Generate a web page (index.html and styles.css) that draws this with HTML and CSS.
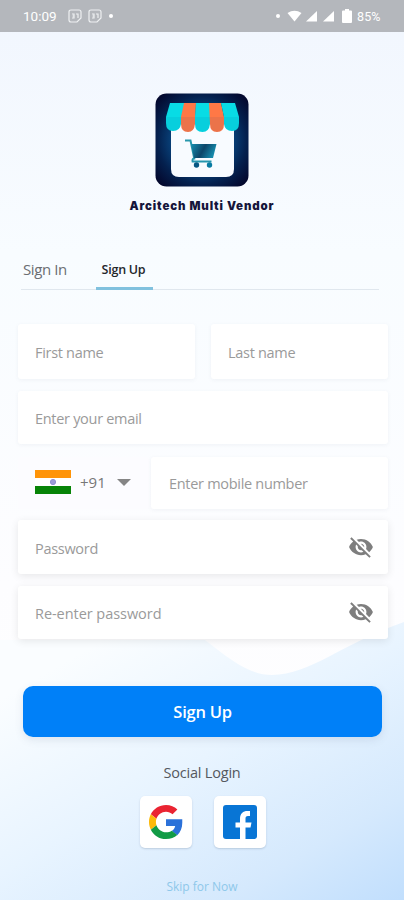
FILE: index.html
```
<!DOCTYPE html>
<html lang="en">
<head>
<meta charset="utf-8">
<title>Arcitech Multi Vendor</title>
<link rel="stylesheet" href="styles.css">
</head>
<body>
<div class="screen">
  <svg class="backdrop" viewBox="0 0 404 900" aria-hidden="true">
    <defs>
      <linearGradient id="sky" x1="0" y1="0" x2="0" y2="1"><stop offset="0" stop-color="#f1f6fe"/><stop offset=".28" stop-color="#f8fcff"/><stop offset=".65" stop-color="#fdfdff"/><stop offset="1" stop-color="#fff"/></linearGradient>
      <linearGradient id="wave" gradientUnits="userSpaceOnUse" x1="120" y1="630" x2="310" y2="960"><stop offset="0" stop-color="#fafdff"/><stop offset=".4" stop-color="#e8f4ff"/><stop offset=".75" stop-color="#d5e9fd"/><stop offset="1" stop-color="#c0defd"/></linearGradient>
    </defs>
    <rect width="404" height="900" fill="url(#sky)"/>
    <path d="M0 640H205C232 661 250 675 272 675C310 675 345 642 404 622V900H0Z" fill="url(#wave)"/>
  </svg>

  <header class="status">
    <span class="clock">10:09</span>
    <svg class="cal" viewBox="0 0 14 14"><path d="M3 1h8q2 0 2 2v6l-4 4H3q-2 0-2-2V3q0-2 2-2Z"/><path d="M4 5h2v2H4.500h1.500v2H4M8 5h2v4"/></svg>
    <svg class="cal" viewBox="0 0 14 14"><path d="M3 1h8q2 0 2 2v6l-4 4H3q-2 0-2-2V3q0-2 2-2Z"/><path d="M4 5h2v2H4.500h1.500v2H4M8 5h2v4"/></svg>
    <i class="dot"></i>
    <svg class="signals" viewBox="0 0 78 16">
      <circle cx="3" cy="8" r="2"/><path d="M12.500 5Q19.500 .500 26.500 5L19.500 13.500Z"/><path d="M42 3v10.500H31Z"/><path d="M59 3v10.500H48Z"/><path d="M68 2.500h2V1h4v1.500h2q1 0 1 1V14q0 1-1 1h-8q-1 0-1-1V3.500q0-1 1-1Z"/>
    </svg>
    <span class="charge">85%</span>
  </header>

  <section class="brand">
    <svg class="logo" viewBox="0 0 94 94">
      <defs>
        <radialGradient id="night" cx=".5" cy=".5" r=".66"><stop offset=".3" stop-color="#0c5b9c"/><stop offset=".72" stop-color="#04214f"/><stop offset="1" stop-color="#03062b"/></radialGradient>
        <linearGradient id="metal" x1="0" y1="0" x2="1" y2=".3"><stop offset="0" stop-color="#168fb0"/><stop offset=".55" stop-color="#0c4569"/><stop offset="1" stop-color="#178aab"/></linearGradient>
      </defs>
      <rect x=".500" y=".500" width="93" height="93" rx="11" fill="url(#night)"/>
      <path d="M16 28H79V76Q79 84 71 84H24Q16 84 16 76Z" fill="#f8fbff"/>
      <path d="M15 10H30L26 31Q25 38 18 38Q11 38 11 30V24Z" fill="#08dce5"/>
      <path d="M29 10H41L40 31Q39 39 33 39Q26 39 26 31V24Z" fill="#ff7846"/>
      <path d="M41 10H55V31Q54 39 47.500 39Q40 39 40 31V24Z" fill="#08dce5"/>
      <path d="M54 10H66L69 24V31Q69 39 62 39Q55 39 55 31Z" fill="#ff7846"/>
      <path d="M66 10H80L84 24V30Q84 38 77 38Q70 38 69 31V24Z" fill="#08dce5"/>
      <path d="M11 24H84V30Q84 38 77 38Q70 38 69 31Q68 39 62 39Q56 39 55 31Q54 39 47.500 39Q41 39 40 31Q39 39 33 39Q27 39 26 31Q25 38 18 38Q11 38 11 30Z" fill="#003f80" opacity=".08"/>
      <path d="M30 47.500h5.500l4 19" fill="none" stroke="#2898ac" stroke-width="2"/>
      <path d="M36 51H61.500L58 65H39Z" fill="url(#metal)"/>
      <path d="M39 65q-2 1-1.500 3.500h19" fill="none" stroke="#2495ad" stroke-width="1.800"/>
      <circle cx="41.500" cy="72" r="2.700" fill="#075783"/><circle cx="54.500" cy="72" r="2.700" fill="#087ba2"/>
    </svg>
    <h1 class="name">Arcitech Multi Vendor</h1>
  </section>

  <nav class="tabs">
    <a class="tab"><span class="t-in">Sign In</span></a>
    <a class="tab active"><span class="t-up">Sign Up</span></a>
  </nav>

  <form class="form">
    <div class="row names">
      <label class="field"><span class="hint">First name</span></label>
      <label class="field"><span class="hint">Last name</span></label>
    </div>
    <label class="field email"><span class="hint">Enter your email</span></label>
    <div class="row phone">
      <div class="field code">
        <svg class="flag" viewBox="0 0 36 24"><path fill="#fff" d="M0 0h36v24H0z"/><path fill="#ff9408" d="M0 0h36v8H0z"/><path fill="#078407" d="M0 16h36v8H0z"/><circle cx="18" cy="12" r="2.600" fill="#9c9cd8" stroke="#8f8fd0"/></svg>
        <span class="prefix">+91</span>
        <svg class="caret" viewBox="0 0 14 7"><path d="M0 0h14L7 7Z"/></svg>
      </div>
      <label class="field mobile"><span class="hint">Enter mobile number</span></label>
    </div>
    <label class="field secret"><span class="hint">Password</span>
      <svg class="eye" viewBox="0 0 24 24"><path d="M12 7c2.760 0 5 2.240 5 5 0 .65-.13 1.260-.36 1.830l2.920 2.920c1.510-1.260 2.700-2.890 3.430-4.750-1.730-4.390-6-7.500-11-7.500-1.400 0-2.740.25-3.980.7l2.160 2.160C10.740 7.130 11.350 7 12 7zM2 4.270l2.280 2.280.46.46C3.080 8.300 1.780 10.020 1 12c1.730 4.390 6 7.500 11 7.500 1.550 0 3.030-.3 4.380-.84l.42.42L19.730 22 21 20.730 3.270 3 2 4.270zM7.530 9.800l1.550 1.550c-.05.21-.08.43-.08.65 0 1.660 1.340 3 3 3 .22 0 .44-.03.65-.08l1.550 1.550c-.67.33-1.410.53-2.200.53-2.760 0-5-2.240-5-5 0-.79.2-1.530.53-2.200zm4.310-.78l3.150 3.150.02-.16c0-1.660-1.340-3-3-3l-.17.01z"/></svg>
    </label>
    <label class="field secret"><span class="hint repeat">Re-enter password</span>
      <svg class="eye" viewBox="0 0 24 24"><path d="M12 7c2.760 0 5 2.240 5 5 0 .65-.13 1.260-.36 1.830l2.920 2.920c1.510-1.260 2.700-2.890 3.430-4.750-1.730-4.390-6-7.500-11-7.500-1.400 0-2.740.25-3.980.7l2.160 2.160C10.740 7.130 11.350 7 12 7zM2 4.270l2.280 2.280.46.46C3.080 8.300 1.780 10.020 1 12c1.730 4.390 6 7.500 11 7.500 1.550 0 3.030-.3 4.380-.84l.42.42L19.730 22 21 20.730 3.270 3 2 4.270zM7.530 9.800l1.550 1.550c-.05.21-.08.43-.08.65 0 1.660 1.340 3 3 3 .22 0 .44-.03.65-.08l1.550 1.550c-.67.33-1.410.53-2.200.53-2.760 0-5-2.240-5-5 0-.79.2-1.530.53-2.200zm4.310-.78l3.150 3.150.02-.16c0-1.660-1.340-3-3-3l-.17.01z"/></svg>
    </label>
    <button class="submit" type="button">Sign Up</button>
  </form>

  <footer class="social">
    <p class="title">Social Login</p>
    <div class="providers">
      <a class="provider"><svg viewBox="0 0 48 48"><path fill="#ea2432" d="M24 9.500c3.540 0 6.710 1.220 9.210 3.600l6.850-6.850C35.900 2.380 30.470 0 24 0 14.620 0 6.510 5.380 2.560 13.220l7.980 6.190C12.430 13.720 17.740 9.500 24 9.500z"/><path fill="#2b71d9" d="M46.980 20H24v9.500h12.940c-.58 2.960-2.260 5.480-4.780 7.180l7.730 6C44.400 38.500 47 32.300 47 24.550c0-1.600 0-3-.02-4.550z"/><path fill="#fcb90a" d="M10.530 28.590c-.48-1.450-.76-2.990-.76-4.590s.27-3.140.76-4.590l-7.980-6.190C.92 16.460 0 20.120 0 24c0 3.880.92 7.540 2.560 10.780l7.970-6.190z"/><path fill="#119b46" d="M24 48c6.480 0 11.930-2.130 15.890-5.810l-7.730-6c-2.150 1.450-4.920 2.300-8.160 2.300-6.260 0-11.570-4.220-13.470-9.910l-7.980 6.190C6.510 42.620 14.620 48 24 48z"/></svg></a>
      <a class="provider"><svg viewBox="0 0 34 34"><rect width="34" height="34" rx="3" fill="#0875d5"/><path fill="#fff" d="M17 34V22.500h-4.500v-5H17V14c0-5.500 3-8 7.500-8H27v5h-2c-2 0-2.500 1-2.500 2.700v3.800h6L27.500 22.500h-5V34Z"/></svg></a>
    </div>
    <a class="skip">Skip for Now</a>
  </footer>
</div>
</body>
</html>
```
FILE: styles.css
```
* { box-sizing: border-box; }
body { margin: 0; font-family: "Open Sans", "Noto Sans", sans-serif; }
.screen { position: relative; width: 404px; height: 900px; overflow: hidden; display: flex; flex-direction: column; isolation: isolate; }
.backdrop { position: absolute; inset: 0; width: 404px; height: 900px; z-index: -1; }

.status { flex: none; height: 32px; padding: 0 22px 0 23px; display: flex; align-items: center; background: #b4b7bc; color: #fff; font-family: Roboto, sans-serif; }
.clock { width: 45px; font-size: 13.500px; line-height: 16px; }
.cal { width: 14px; height: 14px; margin-right: 6px; fill: none; stroke: #eef0f2; stroke-width: 1.200; }
.dot { width: 4px; height: 4px; margin-left: 1px; border-radius: 50%; background: #fff; }
.signals { width: 78px; height: 16px; margin-left: auto; fill: #fff; }
.charge { width: 25px; margin-left: 4px; font-size: 12.500px; letter-spacing: .1px; white-space: nowrap; }

.brand { height: 216px; padding-top: 61px; display: flex; flex-direction: column; align-items: center; }
.logo { width: 94px; height: 94px; flex: none; }
.name { margin: 10.500px 0 0; font: 900 11.500px/16px Inter, sans-serif; letter-spacing: .85px; color: #15153b; white-space: nowrap; }

.tabs { margin: 0 25px 0 21px; height: 42px; display: flex; border-bottom: 1px solid #e0e7ee; white-space: nowrap; }
.tab { display: flex; align-items: center; height: 42px; padding: 0 2px 0; font-size: 15px; color: #6b6e72; }
.tab.active { width: 57px; margin-left: auto; margin-right: 226px; padding: 4px 2px 0 0; justify-content: center; border-bottom: 3px solid #81c1de; font-size: 12.500px; font-weight: 600; color: #24272b; }
.t-in { letter-spacing: -.4px; }
.t-up { letter-spacing: -.25px; }

.form { padding: 34px 16px 0 18px; display: flex; flex-direction: column; }
.row { display: grid; }
.names { grid-template-columns: 177px 177px; gap: 16px; }
.phone { grid-template-columns: 131px 1fr; gap: 2px; margin-top: 13px; }
.field { height: 53px; padding: 2px 16px 0 17px; display: flex; align-items: center; background: #fff; border-radius: 3px; box-shadow: 0 1px 4px rgba(50,70,100,.06); }
.names .field { height: 55px; }
.email { margin-top: 12px; }
.phone .field { height: 52px; }
.phone .code { padding: 0 16px 0 17px; background: #fcfcff; box-shadow: none; }
.flag { width: 36px; height: 24px; flex: none; margin-bottom: 2px; }
.prefix { margin: 0 0 2px 9px; width: 37px; font-size: 15px; color: #777; letter-spacing: 0; }
.caret { width: 14px; height: 7px; fill: #858585; flex: none; margin-bottom: 2px; }
.phone .mobile { padding: 0 16px 0 18px; }
.secret { justify-content: space-between; height: 54px; margin-top: 11px; box-shadow: 0 2px 8px rgba(0,0,0,.09); padding-right: 14px; }
.secret + .secret { margin-top: 12px; height: 53px; }
.hint { font-size: 14.500px; color: #9a9a9a; letter-spacing: -.3px; white-space: nowrap; }
.repeat { letter-spacing: -.05px; }
.eye { width: 26px; height: 26px; fill: #7e7e7e; flex: none; margin-bottom: 3px; }
.submit { margin: 47px 6px 0 5px; height: 51px; border: 0; border-radius: 10px; background: #0080f8; color: #fff; font: 600 16.500px/24px "Open Sans", sans-serif; letter-spacing: -.25px; box-shadow: 0 3px 8px rgba(80,90,120,.13); }

.social { display: flex; flex-direction: column; align-items: center; }
.title { margin: 26px 0 0; font-size: 14.500px; line-height: 20px; letter-spacing: -.2px; color: #54585e; }
.providers { display: flex; gap: 22px; margin: 13px 0 0 2px; }
.provider { width: 52px; height: 52px; display: flex; align-items: center; justify-content: center; background: #fff; border-radius: 5px; box-shadow: 0 1px 2px rgba(60,80,110,.22); }
.provider svg { width: 34px; height: 34px; }
.skip { margin-top: 30px; font-size: 12px; line-height: 18px; color: #8ec8ea; white-space: nowrap; }
```
